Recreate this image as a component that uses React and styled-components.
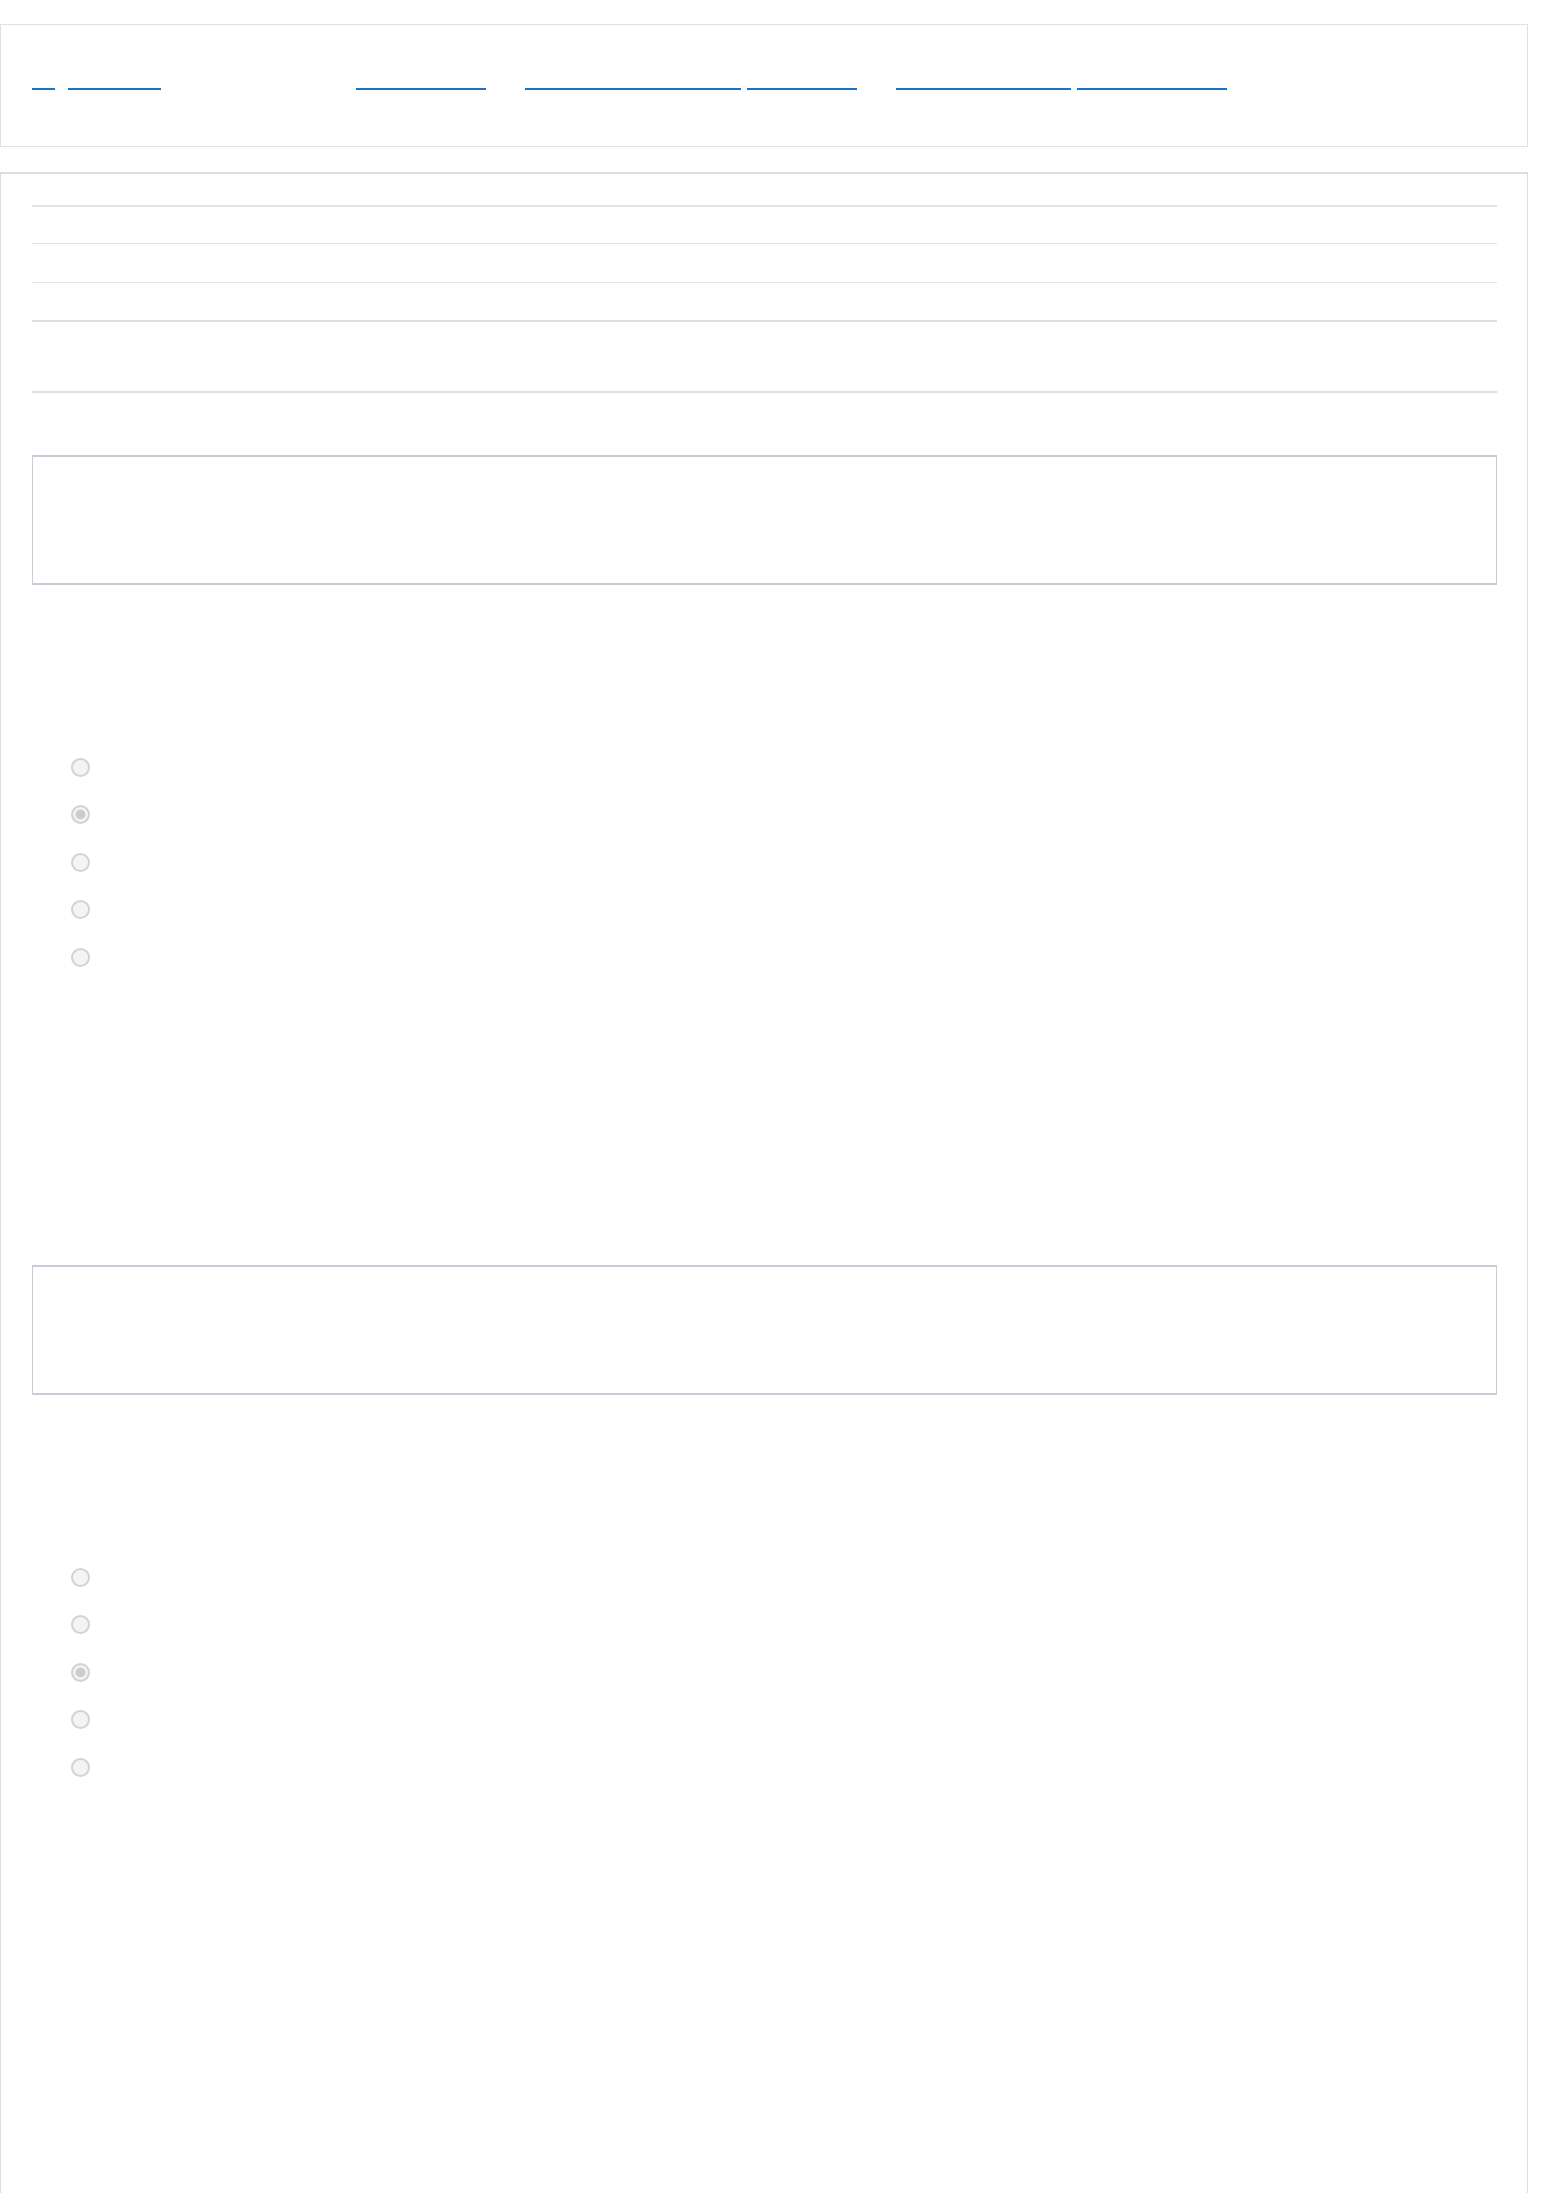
import React from 'react'
import styled, { createGlobalStyle } from 'styled-components'

const GlobalStyle = createGlobalStyle`
  html, body {
    margin: 0;
    padding: 0;
    background: #ffffff;
  }
  body {
    font-family: "Liberation Sans", Arial, sans-serif;
    font-size: 16px;
  }
`

const Page = styled.div`
  width: 1528px;
  padding-top: 24px;
  color: transparent;
`

const NavBar = styled.nav`
  box-sizing: border-box;
  height: 123px;
  border: 1px solid #e1e1e1;
  padding: 45px 31px 0;
  display: flex;
  align-items: flex-start;
`

const NavGroup = styled.div`
  display: flex;
  gap: ${p => p.$gap}px;
  margin-left: ${p => p.$offset || 0}px;
`

const NavLink = styled.a`
  display: block;
  box-sizing: border-box;
  width: ${p => p.$w}px;
  height: 20px;
  line-height: 18px;
  border-bottom: 2px solid #1a73c9;
  overflow: hidden;
  white-space: nowrap;
  color: transparent;
  text-decoration: none;
  font-size: 15px;
`

const Main = styled.main`
  box-sizing: border-box;
  margin-top: 25px;
  min-height: 2100px;
  border: 1px solid #dddddd;
  border-top: 2px solid #dedede;
  padding: 31px 30px 40px 31px;
`

const Summary = styled.div`
  border-top: 2px solid #dfe2e6;
`

const SummaryRow = styled.div`
  height: ${p => p.$h}px;
  border-bottom: ${p => (p.$thick ? 2 : 1)}px solid ${p => (p.$thick ? '#dcdfe3' : '#e2e4e7')};
  display: grid;
  grid-template-columns: 240px 1fr;
  align-items: center;
  font-size: 15px;
`

const Question = styled.section`
  margin-top: ${p => p.$top}px;
`

const Prompt = styled.div`
  box-sizing: border-box;
  height: 130px;
  border: 1px solid #c6cdd7;
  border-top-width: 2px;
  border-bottom-width: 2px;
  padding: 20px;
`

const Options = styled.div`
  margin-top: 158.5px;
  padding-left: 39px;
`

const Option = styled.label`
  height: 47.5px;
  display: flex;
  align-items: center;
  gap: 12px;
  font-size: 15px;
`

const Radio = styled.input.attrs({ type: 'radio' })`
  appearance: none;
  -webkit-appearance: none;
  box-sizing: border-box;
  margin: 0;
  width: 19px;
  height: 19px;
  border-radius: 50%;
  border: 2px solid #d3d3d3;
  background: #f4f4f4;

  &:checked {
    background: #cccccc;
    box-shadow: inset 0 0 0 2.5px #f6f6f6;
  }
`

const summary = [
  { label: 'Started on', h: 36 },
  { label: 'State', h: 38 },
  { label: 'Completed on', h: 37, thick: true },
  { label: 'Grade', h: 69, thick: true },
]

const questions = [
  { id: 1, top: 62, text: 'Question 1', picked: 1 },
  { id: 2, top: 284, text: 'Question 2', picked: 2 },
]

const choices = ['a.', 'b.', 'c.', 'd.', 'e.']

export default function App() {
  return (
    <>
      <GlobalStyle />
      <Page>
        <NavBar>
          <NavGroup $gap={13}>
            <NavLink $w={23} href="#">«</NavLink>
            <NavLink $w={93} href="#">Course</NavLink>
          </NavGroup>
          <NavGroup $gap={0} $offset={195}>
            <NavLink $w={130} href="#">Quiz navigation</NavLink>
          </NavGroup>
          <NavGroup $gap={6} $offset={39}>
            <NavLink $w={216} href="#">Previous question</NavLink>
            <NavLink $w={110} href="#">Review</NavLink>
          </NavGroup>
          <NavGroup $gap={6} $offset={39}>
            <NavLink $w={175} href="#">Next question</NavLink>
            <NavLink $w={150} href="#">Finish review</NavLink>
          </NavGroup>
        </NavBar>

        <Main>
          <Summary>
            {summary.map(r => (
              <SummaryRow key={r.label} $h={r.h} $thick={r.thick}>
                <span>{r.label}</span>
                <span></span>
              </SummaryRow>
            ))}
          </Summary>

          {questions.map(q => (
            <Question key={q.id} $top={q.top}>
              <Prompt>{q.text}</Prompt>
              <Options>
                {choices.map((c, i) => (
                  <Option key={c}>
                    <Radio name={'q' + q.id} disabled defaultChecked={i === q.picked} />
                    <span>{c}</span>
                  </Option>
                ))}
              </Options>
            </Question>
          ))}
        </Main>
      </Page>
    </>
  )
}
